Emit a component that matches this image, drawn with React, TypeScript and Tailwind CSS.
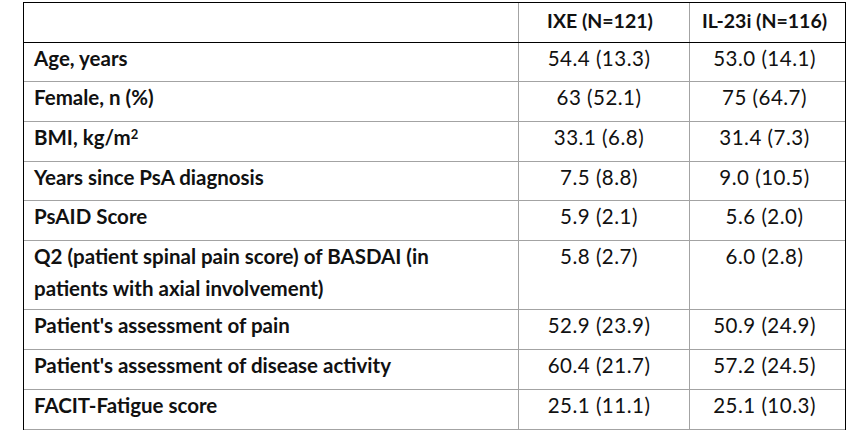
const rows: { label: React.ReactNode; a: string; b: string; h: string }[] = [
  { label: 'Age, years', a: '54.4 (13.3)', b: '53.0 (14.1)', h: 'h-[39px]' },
  { label: 'Female, n (%)', a: '63 (52.1)', b: '75 (64.7)', h: 'h-[40px]' },
  {
    label: (
      <>
        BMI, kg/m<sup className="text-[13px]">2</sup>
      </>
    ),
    a: '33.1 (6.8)',
    b: '31.4 (7.3)',
    h: 'h-[40px]',
  },
  { label: 'Years since PsA diagnosis', a: '7.5 (8.8)', b: '9.0 (10.5)', h: 'h-[39px]' },
  { label: 'PsAID Score', a: '5.9 (2.1)', b: '5.6 (2.0)', h: 'h-[40px]' },
  {
    label: 'Q2 (patient spinal pain score) of BASDAI (in patients with axial involvement)',
    a: '5.8 (2.7)',
    b: '6.0 (2.8)',
    h: 'h-[69px]',
  },
  { label: "Patient's assessment of pain", a: '52.9 (23.9)', b: '50.9 (24.9)', h: 'h-[40px]' },
  { label: "Patient's assessment of disease activity", a: '60.4 (21.7)', b: '57.2 (24.5)', h: 'h-[40px]' },
  { label: 'FACIT-Fatigue score', a: '25.1 (11.1)', b: '25.1 (10.3)', h: 'h-[40px]' },
];

export default function App() {
  return (
    <div className="h-[433px] w-[865px] bg-white pt-[2px] font-['Lato','Liberation_Sans',sans-serif] text-[20.5px] leading-[28px] text-[#111]">
      <div className="ml-[23px] w-[823px] border-x border-t border-black">
        <div className="grid h-[40px] grid-cols-[495px_171px_155px] border-b border-black text-[19.5px] font-bold">
          <div className="border-r border-[#a3a3a3]" />
          <div className="border-r border-[#a3a3a3] pr-[8px] pt-[4px] text-center">IXE (N=121)</div>
          <div className="pr-[6px] pt-[4px] text-center">IL-23i (N=116)</div>
        </div>
        {rows.map((r, i) => (
          <div key={i} className={`grid grid-cols-[495px_171px_155px] border-b border-[#a3a3a3] ${r.h}`}>
            <div className="border-r border-[#a3a3a3] pl-[10px] pr-[50px] font-bold">
              <div className={r.h === 'h-[69px]' ? 'leading-[32px] -mt-[1px]' : 'pt-[1px]'}>{r.label}</div>
            </div>
            <div className="border-r border-[#a3a3a3] pr-[10px] pt-[1px] text-center tracking-[0.5px]">{r.a}</div>
            <div className="pr-[6px] pt-[1px] text-center tracking-[0.5px]">{r.b}</div>
          </div>
        ))}
      </div>
    </div>
  );
}
